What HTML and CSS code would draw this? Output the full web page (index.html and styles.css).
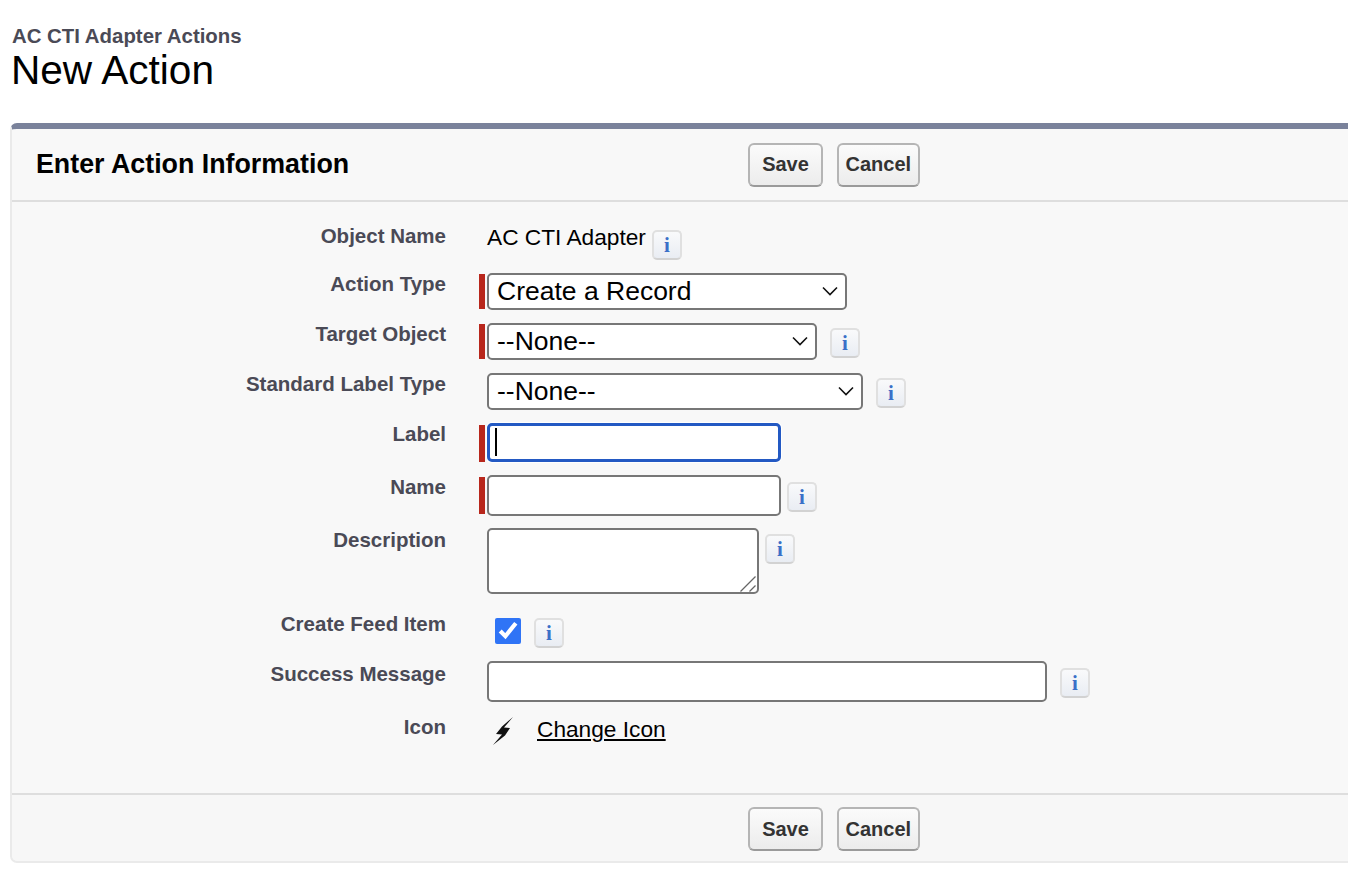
FILE: index.html
```html
<!DOCTYPE html>
<html lang="en">
<head>
  <meta charset="UTF-8">
  <title>New Action</title>
  <link rel="stylesheet" href="styles.css">
</head>
<body>
  <div class="page-title">
    <div class="object-type">AC CTI Adapter Actions</div>
    <h1>New Action</h1>
  </div>

  <form class="panel">
    <div class="panel-header">
      <h2>Enter Action Information</h2>
      <div class="buttons">
        <button type="button">Save</button>
        <button type="button">Cancel</button>
      </div>
    </div>

    <div class="panel-body">
      <div class="row row-object">
        <label>Object Name</label>
        <div class="field">
          <span class="value">AC CTI Adapter</span>
          <span class="info info-object">i</span>
        </div>
      </div>

      <div class="row">
        <label>Action Type</label>
        <div class="field">
          <span class="req"></span>
          <div class="select-wrap w-action">
            <select><option>Create a Record</option></select>
            <svg class="chevron" viewBox="0 0 16 10"><path d="M1 1.5l7 7 7-7" fill="none" stroke="#111" stroke-width="1.6"/></svg>
          </div>
        </div>
      </div>

      <div class="row">
        <label>Target Object</label>
        <div class="field">
          <span class="req"></span>
          <div class="select-wrap w-target">
            <select><option>--None--</option></select>
            <svg class="chevron" viewBox="0 0 16 10"><path d="M1 1.5l7 7 7-7" fill="none" stroke="#111" stroke-width="1.6"/></svg>
          </div>
          <span class="info gap-13">i</span>
        </div>
      </div>

      <div class="row row-std">
        <label>Standard Label Type</label>
        <div class="field">
          <div class="select-wrap w-std">
            <select><option>--None--</option></select>
            <svg class="chevron" viewBox="0 0 16 10"><path d="M1 1.5l7 7 7-7" fill="none" stroke="#111" stroke-width="1.6"/></svg>
          </div>
          <span class="info gap-13">i</span>
        </div>
      </div>

      <div class="row row-label">
        <label>Label</label>
        <div class="field">
          <span class="req req-tall"></span>
          <div class="focus-wrap">
            <input type="text" class="text-input focused">
            <span class="caret"></span>
          </div>
        </div>
      </div>

      <div class="row row-name">
        <label>Name</label>
        <div class="field">
          <span class="req req-tall"></span>
          <input type="text" class="text-input name-input">
          <span class="info gap-6">i</span>
        </div>
      </div>

      <div class="row row-desc">
        <label>Description</label>
        <div class="field">
          <div class="textarea-wrap">
            <textarea></textarea>
            <svg class="grip" viewBox="0 0 16 16"><path d="M15.500.5l-15 15M15.500 9.500l-6 6" fill="none" stroke="#666" stroke-width="1.300"/></svg>
          </div>
          <span class="info gap-6">i</span>
        </div>
      </div>

      <div class="row row-check">
        <label>Create Feed Item</label>
        <div class="field">
          <input type="checkbox" class="check" checked>
          <span class="info gap-13 info-check">i</span>
        </div>
      </div>

      <div class="row row-success">
        <label>Success Message</label>
        <div class="field">
          <input type="text" class="text-input success-input">
          <span class="info gap-13">i</span>
        </div>
      </div>

      <div class="row row-icon">
        <label>Icon</label>
        <div class="field">
          <svg class="bolt" viewBox="0 0 20 28"><path d="M20 0L9 9.500 3 17l6 .500L0 28l12-9.500L17 11l-6-.500z" fill="#111"/></svg>
          <a href="#" class="change-icon">Change Icon</a>
        </div>
      </div>
    </div>

    <div class="panel-footer">
      <div class="buttons">
        <button type="button">Save</button>
        <button type="button">Cancel</button>
      </div>
    </div>
  </form>
</body>
</html>
```

FILE: styles.css
```css
html, body {
  margin: 0;
  height: 882px;
  overflow: hidden;
  background: #ffffff;
  font-family: "Liberation Sans", Arial, sans-serif;
}

.page-title {
  padding: 24px 0 0 12px;
  height: 123px;
  box-sizing: border-box;
}
.object-type {
  font-size: 20.400px;
  line-height: 24px;
  font-weight: bold;
  color: #4a4a56;
}
h1 {
  margin: 0 0 0 -1px;
  font-size: 40.600px;
  line-height: 44px;
  font-weight: normal;
  color: #000000;
}

.panel {
  margin: 0 -12px 0 10px;
  height: 740px;
  box-sizing: border-box;
  display: flex;
  flex-direction: column;
  background: #f8f8f8;
  border: 2px solid #eaeaea;
  border-top: 6px solid #7a829b;
  border-radius: 7px;
}

.panel-header {
  display: flex;
  align-items: center;
  height: 73px;
  box-sizing: border-box;
  padding-left: 24px;
  border-bottom: 2px solid #dedede;
}
h2 {
  margin: 0;
  width: 712px;
  font-size: 26.800px;
  font-weight: bold;
  color: #000000;
}
.buttons {
  display: flex;
  gap: 14px;
}
button {
  height: 44px;
  padding: 0 6.500px;
  min-width: 75px;
  box-sizing: border-box;
  font-family: inherit;
  font-size: 20px;
  font-weight: bold;
  color: #333333;
  background: linear-gradient(#fbfbfb, #ececec);
  border: 2px solid #b5b5b5;
  border-bottom-color: #9a9a9a;
  border-radius: 6px;
}

.panel-body {
  flex: 1;
  padding-top: 23px;
}
.row {
  display: grid;
  grid-template-columns: 434px 1fr;
  column-gap: 41px;
  margin-bottom: 13px;
}
.row label {
  text-align: right;
  font-size: 20.500px;
  line-height: 22px;
  font-weight: bold;
  color: #4a4a56;
}
.field {
  display: flex;
  align-items: flex-start;
}
.row-object {
  height: 34px;
  margin-bottom: 14px;
}
.row-std { margin-bottom: 14px; }
.row-label { margin-bottom: 14px; }
.row-label label { margin-top: -1px; }
.row-name { margin-bottom: 12px; }
.row-desc { margin-bottom: 19px; }
.row-desc label { padding-top: 1px; }
.row-check {
  height: 35px;
  margin-bottom: 14px;
}
.row-success { margin-bottom: 14px; }
.row-success label { padding-top: 1px; }

.value {
  font-size: 22.700px;
  line-height: 24px;
  color: #000000;
}

.req {
  width: 6px;
  height: 35px;
  margin: 1px 2px 0 -8px;
  background: #b8271c;
}
.req-tall { height: 37px; }

.select-wrap {
  position: relative;
  height: 37px;
}
.w-action { width: 360px; }
.w-target { width: 330px; }
.w-std { width: 376px; }
select {
  width: 100%;
  height: 100%;
  padding: 0 0 2px 8px;
  appearance: none;
  font-family: inherit;
  font-size: 26.500px;
  color: #000000;
  background: #ffffff;
  border: 2px solid #777777;
  border-radius: 5px;
}
.chevron {
  position: absolute;
  top: 13px;
  right: 9px;
  width: 16px;
  height: 10px;
}

.text-input {
  display: block;
  width: 294px;
  height: 39px;
  box-sizing: border-box;
  background: #ffffff;
  border: 2px solid #777777;
  border-radius: 5px;
  outline: none;
}
.name-input {
  height: 41px;
  margin-top: -1px;
}
.focus-wrap { position: relative; }
.focused {
  height: 39px;
  margin-top: -1px;
  border: 3px solid #2359c3;
  box-shadow: 0 0 0 1px #ffffff;
}
.caret {
  position: absolute;
  left: 8px;
  top: 4px;
  width: 2px;
  height: 28px;
  background: #000000;
}
.success-input {
  width: 560px;
  height: 41px;
  margin-top: -1px;
}
.textarea-wrap { position: relative; }
textarea {
  display: block;
  width: 272px;
  height: 66px;
  box-sizing: border-box;
  margin: 0;
  resize: none;
  background: #ffffff;
  border: 2px solid #777777;
  border-radius: 5px;
}
.grip {
  position: absolute;
  right: 3px;
  bottom: 2px;
  width: 16px;
  height: 16px;
}

.check {
  width: 26px;
  height: 26px;
  margin: 5px 0 0 8px;
  accent-color: #2f74f6;
}

.info {
  width: 30px;
  height: 30px;
  margin-top: 6px;
  box-sizing: border-box;
  flex: none;
  text-align: center;
  font-family: "Liberation Serif", serif;
  font-size: 21px;
  line-height: 27px;
  font-weight: bold;
  color: #3a70c8;
  background: linear-gradient(#f9fafb, #e9edf3);
  border: 2px solid #e0e0e0;
  border-bottom-color: #d2d2d2;
  border-radius: 5px;
}
.select-wrap + .info { margin-top: 5px; }
.info-object {
  margin-top: 5px;
  margin-left: 6px;
}
.gap-13 { margin-left: 13px; }
.gap-6 { margin-left: 6px; }
.info-check { margin-top: 5px; }

.bolt {
  width: 20px;
  height: 28px;
  margin: 1px 24px 0 6px;
  filter: blur(0.6px);
}
.change-icon {
  font-size: 22.700px;
  line-height: 26px;
  color: #000000;
}

.panel-footer {
  height: 68px;
  box-sizing: border-box;
  padding: 12px 0 0 736px;
  border-top: 2px solid #dedede;
  background: #f7f7f7;
  border-radius: 0 0 6px 6px;
}
```
